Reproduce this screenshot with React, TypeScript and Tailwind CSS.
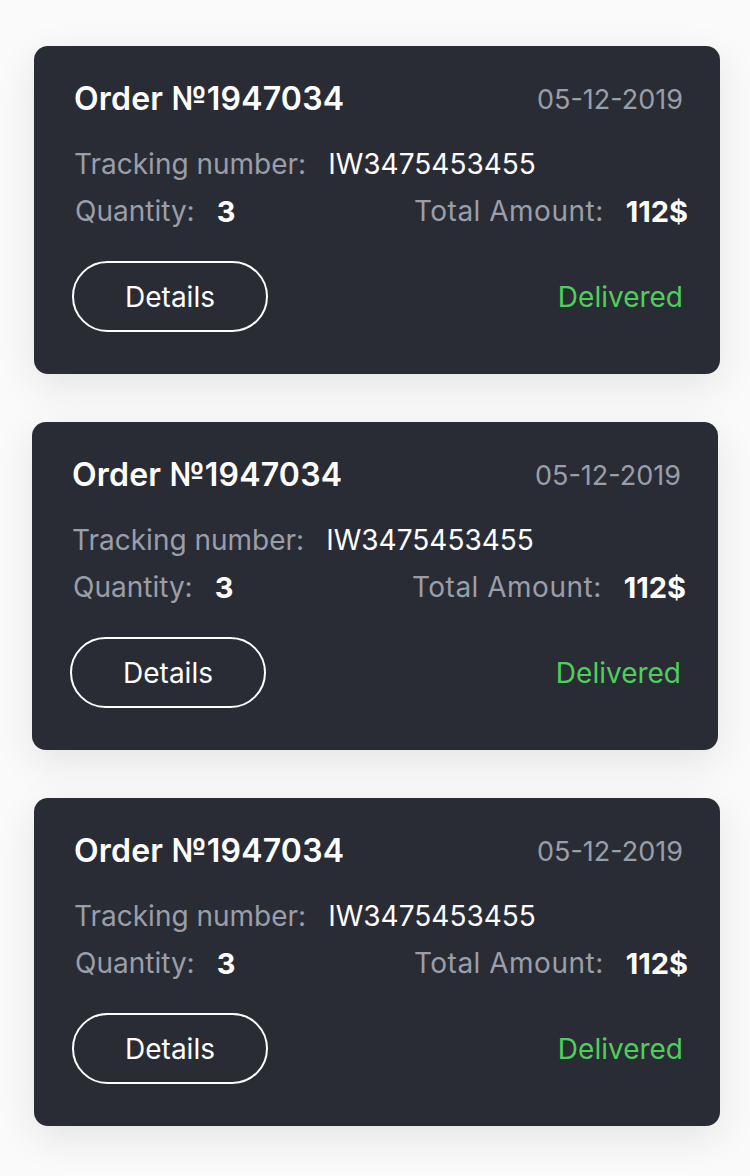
const orders = [0, 1, 2]

function OrderCard({ shift }: { shift?: boolean }) {
  return (
    <div
      className={
        "h-[328px] rounded-[14px] bg-[#2a2c35] pl-10 pr-[37px] pt-[36px] shadow-[0_12px_40px_rgba(0,0,0,0.09)] " +
        (shift ? "-ml-[2px] mr-[2px]" : "")
      }
    >
      <div className="flex items-center justify-between h-[34px] leading-none">
        <span className="text-[32px] font-semibold text-white tracking-[0.2px]">Order №1947034</span>
        <span className="text-[27px] text-[#9a9ea8]">05-12-2019</span>
      </div>
      <div className="mt-[32px] flex items-center h-[32px] text-[28px] leading-none">
        <span className="text-[#9a9ea8]">Tracking number:</span>
        <span className="ml-[22px] text-white">IW3475453455</span>
      </div>
      <div className="mt-[15px] flex items-center justify-between h-[32px] text-[28px] leading-none">
        <div className="flex items-center pl-[1px]">
          <span className="text-[#9a9ea8]">Quantity:</span>
          <span className="ml-[22px] font-bold text-[29px] text-white">3</span>
        </div>
        <div className="flex items-center -mr-[5px]">
          <span className="text-[#9a9ea8] tracking-[0.5px]">Total Amount:</span>
          <span className="ml-[22px] font-bold text-[29px] text-white">112$</span>
        </div>
      </div>
      <div className="mt-[34px] flex items-center justify-between">
        <button className="-ml-[2px] h-[71px] w-[196px] rounded-full border-2 border-white text-[28px] text-white">
          Details
        </button>
        <span className="text-[28px] text-[#4dd05a]">Delivered</span>
      </div>
    </div>
  )
}

export default function App() {
  return (
    <div
      className="min-h-[1176px] bg-[#fafafa] pr-[30px] pl-[34px] pt-[46px] pb-[50px] flex flex-col gap-12"
      style={{ fontFamily: "Inter, 'Noto Sans', sans-serif" }}
    >
      {orders.map((i) => (
        <OrderCard key={i} shift={i === 1} />
      ))}
    </div>
  )
}
